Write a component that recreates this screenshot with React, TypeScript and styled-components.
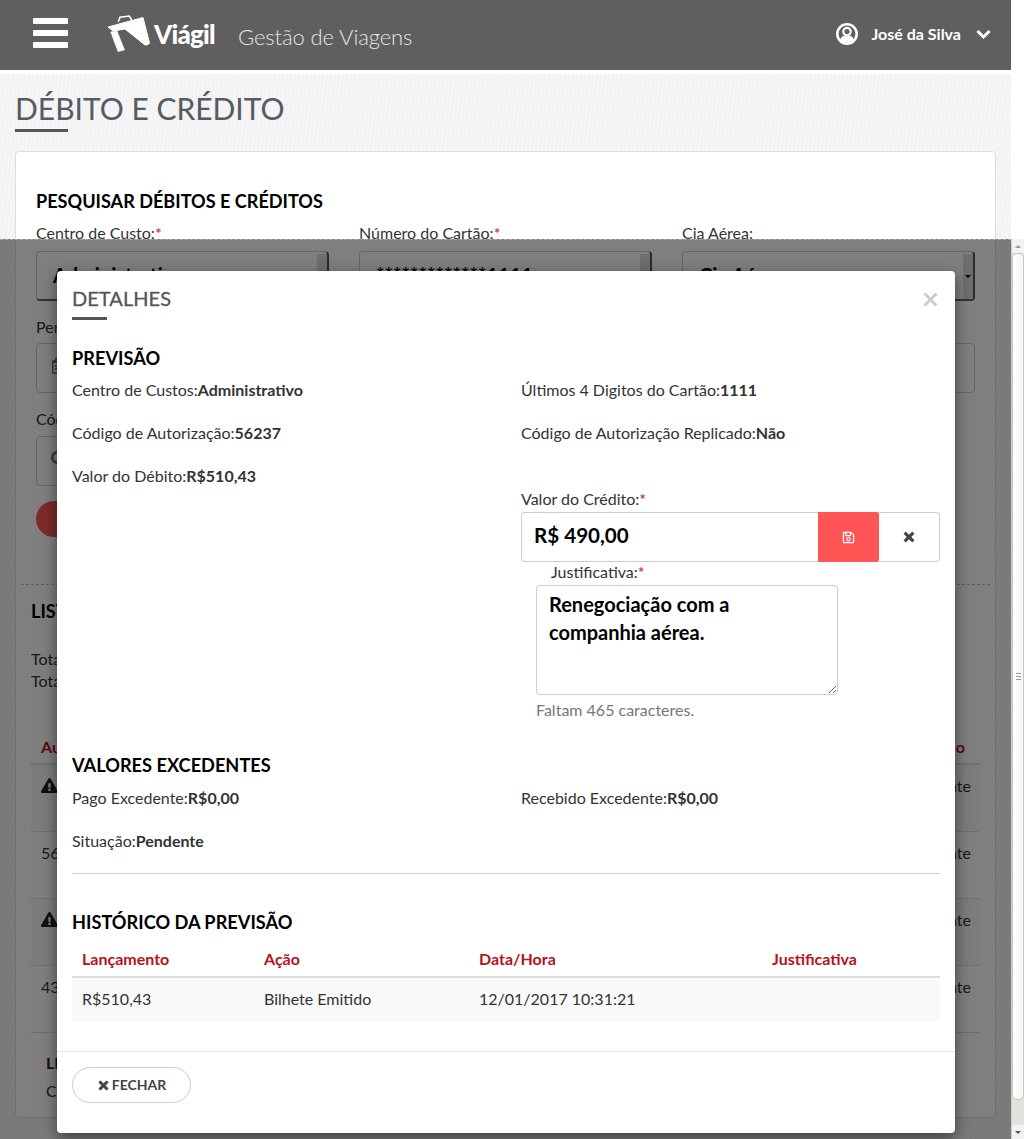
import React from "react";
import styled, { createGlobalStyle } from "styled-components";
import { FaChevronDown, FaExclamationTriangle, FaRegCalendarAlt, FaRegSave, FaSearch, FaTimes } from "react-icons/fa";

const Global = createGlobalStyle`
  html, body { margin: 0; padding: 0; background: #fff; }
  * { box-sizing: border-box; }
  body { font-family: Lato, "Liberation Sans", sans-serif; font-size: 16px; line-height: 20px; color: #333; }
`;

const Page = styled.div`
  position: relative;
  width: 1024px;
  height: 1139px;
  overflow: hidden;
  background: #fff;
`;
const Main = styled.div`
  width: 1011px;
  height: 1139px;
  display: flex;
  flex-direction: column;
`;
const Header = styled.header`
  height: 70px;
  flex: none;
  display: flex;
  align-items: center;
  padding: 0 20px 0 33px;
  color: #fff;
  background: repeating-conic-gradient(#636363 0 25%, #5b5b5b 0 50%) 0 0 / 2px 2px;
`;
const Burger = styled.div`
  width: 35px;
  height: 30px;
  margin-top: -4px;
  display: flex;
  flex-direction: column;
  justify-content: space-between;
  span { display: block; height: 6px; background: #fff; border-radius: 1px; }
`;
const Logo = styled.svg`
  width: 44px;
  height: 38px;
  margin: -4px 0 0 39px;
  flex: none;
`;
const Brand = styled.span`
  font-weight: 900;
  font-size: 26px;
  letter-spacing: -0.8px;
  margin: -2px 0 0 3px;
  width: 84px;
`;
const Tagline = styled.span`
  font-weight: 300;
  font-size: 22px;
  letter-spacing: -0.1px;
  margin-top: 3px;
  color: #e4e4e4;
`;
const User = styled.div`
  margin-left: auto;
  display: flex;
  align-items: center;
  font-weight: 700;
  font-size: 16px;
  margin-top: -2px;
  svg { stroke: currentColor; }
`;
const UserName = styled.span`
  margin: 0 15px 0 13px;
`;
const UserIcon = styled.svg`
  width: 22px;
  height: 22px;
  flex: none;
  stroke: none;
`;
const Chevron = styled(FaChevronDown)`
  stroke-width: 30px;
`;
const Content = styled.main`
  flex: 1;
  margin-top: 4px;
  padding: 0 15px;
  background: repeating-linear-gradient(97deg, #f2f2f2 0 2px, #f6f6f6 2px 4px);
`;
const PageTitle = styled.h1`
  margin: 0;
  padding: 14px 0 0;
  height: 77px;
  font-weight: 400;
  font-size: 30px;
  line-height: 40px;
  color: #555a63;
  &::after {
    content: "";
    display: block;
    width: 53px;
    height: 3px;
    margin-top: 1px;
    background: #555;
  }
`;
const Card = styled.section`
  height: 967px;
  padding: 0 20px;
  background: #fff;
  border: 1px solid #ddd;
  border-radius: 4px;
`;
const SectionTitle = styled.h2`
  margin: 0;
  font-size: 18.2px;
  line-height: 22px;
  font-weight: 700;
  color: #000;
`;
const CardTitle = styled(SectionTitle)`
  padding-top: 38px;
  margin-bottom: 11px;
  font-size: 18.1px;
`;
const FormGrid = styled.div`
  display: grid;
  grid-template-columns: repeat(3, 293px);
  column-gap: 30px;
`;
const Label = styled.label`
  display: block;
  color: #333;
  i { color: #b5121b; font-style: normal; }
`;
const Select = styled.div`
  position: relative;
  height: 50px;
  margin-top: 8px;
  padding: 9px 16px;
  font-size: 20px;
  line-height: 28px;
  font-weight: 700;
  color: #000;
  border: 1px solid #ccc;
  border-right: 2px solid #555;
  border-bottom: 2px solid #666;
  border-radius: 4px;
  &::before {
    content: "";
    position: absolute;
    top: 2px;
    right: 0;
    bottom: 0;
    width: 10px;
    background: #ddd;
  }
  &::after {
    content: "";
    position: absolute;
    top: 23px;
    right: 2px;
    border-left: 3px solid transparent;
    border-right: 3px solid transparent;
    border-top: 3px solid #000;
  }
`;
const WideField = styled.div<{ $top: number }>`
  height: 50px;
  margin-top: ${(p) => p.$top}px;
  padding: 14px;
  border: 1px solid #ccc;
  border-radius: 4px;
  color: #777;
  font-size: 16px;
`;
const CodeField = styled(WideField)`
  width: 293px;
`;
const Block = styled.div<{ $top: number }>`
  margin-top: ${(p) => p.$top}px;
`;
const SearchButton = styled.div`
  width: 130px;
  height: 36px;
  margin-top: 15px;
  background: #ff5555;
  border-radius: 18px;
`;
const ListArea = styled.div`
  margin: 47px -15px 0;
  padding: 15px 10px 0;
  border-top: 1px dashed #bbb;
`;
const TotalLine = styled.p`
  margin: 0;
  line-height: 22px;
`;
const ListTable = styled.div`
  margin-top: 37px;
`;
const ListHead = styled.div`
  height: 36px;
  display: grid;
  grid-template-columns: 863px 1fr;
  padding: 0 10px;
  color: #b5121b;
  font-weight: 700;
  line-height: 36px;
  border-bottom: 2px solid #ddd;
`;
const ListRow = styled.div<{ $odd?: boolean }>`
  height: 67px;
  display: grid;
  grid-template-columns: 863px 1fr;
  padding: 11px 10px 0;
  background: ${(p) => (p.$odd ? "#f9f9f9" : "#fff")};
  border-bottom: 1px solid #ddd;
  svg { color: #222; font-size: 17px; display: block; margin-top: 1px; }
`;
const Legend = styled.div`
  padding: 20px 15px 0;
  strong { display: block; color: #222; margin-bottom: 8px; }
`;

const Overlay = styled.div`
  position: absolute;
  top: 239px;
  left: 0;
  width: 1011px;
  bottom: 0;
  background: rgba(0, 0, 0, 0.5);
  border-top: 1px dashed #aaa;
`;
const Modal = styled.div`
  position: absolute;
  top: 31px;
  left: 57px;
  width: 898px;
  height: 862px;
  background: #fff;
  border-radius: 4px;
  box-shadow: 0 5px 15px rgba(0, 0, 0, 0.5);
`;
const ModalHeader = styled.div`
  display: flex;
  justify-content: space-between;
  padding: 15px 17px 0 15px;
`;
const ModalTitle = styled.h3`
  margin: 0;
  font-size: 20px;
  line-height: 24px;
  font-weight: 400;
  color: #555;
  -webkit-text-stroke: 0.3px #555;
  letter-spacing: 0.05px;
  &::after {
    content: "";
    display: block;
    width: 35px;
    height: 3px;
    margin-top: 7px;
    background: #555;
  }
`;
const CloseIcon = styled.svg`
  width: 15px;
  height: 15px;
  margin-top: 6px;
`;
const ModalBody = styled.div`
  padding: 0 15px;
`;
const ModalSection = styled(SectionTitle)<{ $top: number }>`
  margin-top: ${(p) => p.$top}px;
`;
const TwoCols = styled.div<{ $top: number }>`
  margin-top: ${(p) => p.$top}px;
  display: grid;
  grid-template-columns: 449px 419px;
`;
const Info = styled.div`
  height: 20px;
  margin-bottom: 23px;
  color: #333;
  b { font-weight: 700; }
`;
const CreditBlock = styled.div`
  padding-top: 23px;
`;
const CreditGroup = styled.div`
  display: flex;
  height: 50px;
  margin-top: 3px;
`;
const CreditInput = styled.input`
  flex: 1;
  min-width: 0;
  height: 50px;
  padding: 0 12px 4px;
  font: 700 20.6px Lato, sans-serif;
  color: #000;
  border: 1px solid #ccc;
  border-right: 0;
  border-radius: 4px 0 0 4px;
  outline: 0;
`;
const SaveButton = styled.div`
  width: 61px;
  display: flex;
  align-items: center;
  justify-content: center;
  background: #ff5555;
  color: #fff;
  font-size: 13px;
  border-radius: 0 2px 2px 0;
`;
const CancelButton = styled.div`
  width: 61px;
  display: flex;
  align-items: center;
  justify-content: center;
  color: #444;
  font-size: 14px;
  border: 1px solid #ccc;
  border-left: 0;
  border-radius: 0 4px 4px 0;
  svg { stroke: currentColor; stroke-width: 30px; }
`;
const JustifyBlock = styled.div`
  margin-left: 15px;
`;
const JustifyLabel = styled(Label)`
  padding-left: 15px;
`;
const JustifyArea = styled.textarea`
  display: block;
  width: 302px;
  height: 110px;
  margin-top: 3px;
  padding: 4px 12px;
  font: 700 20px/28px Lato, sans-serif;
  color: #000;
  border: 1px solid #ccc;
  border-radius: 4px;
  outline: 0;
`;
const Remaining = styled.div`
  margin-top: 5px;
  color: #777;
`;
const Divider = styled.hr`
  margin: -1px 0 0;
  border: 0;
  border-top: 1px solid #ccc;
`;
const HistoryTable = styled.table`
  width: 868px;
  margin-top: 5px;
  border-collapse: collapse;
  table-layout: fixed;
  th {
    height: 39px;
    padding: 4px 10px 0;
    text-align: left;
    color: #b5121b;
    font-weight: 700;
    border-bottom: 2px solid #ddd;
    vertical-align: middle;
  }
  td {
    height: 44px;
    padding: 0 10px 2px;
    background: #f9f9f9;
  }
`;
const ModalFooter = styled.div`
  margin-top: 30px;
  padding: 15px;
  border-top: 1px solid #e5e5e5;
`;
const CloseButton = styled.div`
  width: 119px;
  height: 36px;
  display: flex;
  align-items: center;
  justify-content: center;
  gap: 2px;
  font-size: 14px;
  font-weight: 700;
  color: #444;
  border: 1px solid #ccc;
  border-radius: 18px;
  svg { font-size: 13px; stroke: currentColor; stroke-width: 30px; }
`;

const Scrollbar = styled.div`
  position: absolute;
  top: 239px;
  right: 0;
  bottom: 0;
  width: 13px;
  display: flex;
  flex-direction: column;
  background: #e4e2df;
  border-left: 1px solid #cfcdca;
`;
const ScrollArrow = styled.div<{ $down?: boolean }>`
  height: 14px;
  flex: none;
  background: #f3f2f0;
  display: flex;
  align-items: center;
  justify-content: center;
  &::after {
    content: "";
    border-left: 3px solid transparent;
    border-right: 3px solid transparent;
    ${(p) => (p.$down ? "border-top: 3px solid #555;" : "border-bottom: 3px solid #999;")}
  }
`;
const ScrollThumb = styled.div`
  height: 847px;
  flex: none;
  display: flex;
  align-items: center;
  justify-content: center;
  background: linear-gradient(90deg, #fff, #f6f5f3);
  border: 1px solid #c8c6c3;
  border-radius: 5px;
  span { display: block; width: 5px; height: 8px; background: repeating-linear-gradient(#999 0 1px, transparent 1px 3px); }
`;
const ScrollTrack = styled.div`
  flex: 1;
`;

const Logotype = () => (
  <Logo viewBox="0 0 44 38" aria-hidden="true">
    <path d="M1 13 L36 3.5 L42.5 29 Q42 31 38 31 L18 15 L6 17 Z" fill="#fff" stroke="#fff" strokeWidth="1" strokeLinejoin="round" />
    <path d="M3.7 18 L11 37.5 L17.5 36 L10 17 Z" fill="#fff" stroke="#fff" strokeWidth="0.6" strokeLinejoin="round" />
    <path d="M11.3 7.7 L13 3.3 L22.3 2 L24.7 6" fill="none" stroke="#fff" strokeWidth="1.6" />
  </Logo>
);

const AccountIcon = () => (
  <UserIcon viewBox="0 0 22 22" aria-hidden="true">
    <circle cx="11" cy="11" r="9.7" fill="none" stroke="#fff" strokeWidth="2.6" />
    <circle cx="11" cy="8.6" r="3.7" fill="none" stroke="#fff" strokeWidth="2.2" />
    <path d="M4.6 17 Q5.5 13.4 8 13.2 Q11 14.6 14 13.2 Q16.5 13.4 17.4 17 Q11 21.6 4.6 17 Z" fill="#fff" />
  </UserIcon>
);

export default function App() {
  return (
    <Page>
      <Global />
      <Main>
        <Header>
          <Burger><span /><span /><span /></Burger>
          <Logotype />
          <Brand>Viágil</Brand>
          <Tagline>Gestão de Viagens</Tagline>
          <User>
            <AccountIcon />
            <UserName>José da Silva</UserName>
            <Chevron size={15} />
          </User>
        </Header>
        <Content>
          <PageTitle>DÉBITO E CRÉDITO</PageTitle>
          <Card>
            <CardTitle>PESQUISAR DÉBITOS E CRÉDITOS</CardTitle>
            <FormGrid>
              <div><Label>Centro de Custo:<i>*</i></Label><Select>Administrativo</Select></div>
              <div><Label>Número do Cartão:<i>*</i></Label><Select>*************1111</Select></div>
              <div><Label>Cia Aérea:</Label><Select>Cia Aérea</Select></div>
            </FormGrid>
            <Block $top={16}><Label>Período:</Label></Block>
            <WideField $top={6}><FaRegCalendarAlt /></WideField>
            <Block $top={16}><Label>Código:</Label></Block>
            <CodeField $top={7}><FaSearch /></CodeField>
            <SearchButton />
            <ListArea>
              <SectionTitle>LISTA DE DÉBITOS E CRÉDITOS</SectionTitle>
              <Block $top={26}>
                <TotalLine>Total de Débitos: R$ 0,00</TotalLine>
                <TotalLine>Total de Créditos: R$ 0,00</TotalLine>
              </Block>
              <ListTable>
                <ListHead><span>Autorização</span><span>Situação</span></ListHead>
                <ListRow $odd><span><FaExclamationTriangle /></span><span>Pendente</span></ListRow>
                <ListRow><span>56237</span><span>Pendente</span></ListRow>
                <ListRow $odd><span><FaExclamationTriangle /></span><span>Pendente</span></ListRow>
                <ListRow><span>43122</span><span>Pendente</span></ListRow>
              </ListTable>
              <Legend>
                <strong>LEGENDA</strong>
                <span>Crédito</span>
              </Legend>
            </ListArea>
          </Card>
        </Content>
      </Main>
      <Overlay>
        <Modal>
          <ModalHeader>
            <ModalTitle>DETALHES</ModalTitle>
            <CloseIcon viewBox="0 0 15 15" aria-label="Fechar">
              <path d="M1.5 1.5 L13.5 13.5 M13.5 1.5 L1.5 13.5" stroke="#ccc" strokeWidth="3" fill="none" />
            </CloseIcon>
          </ModalHeader>
          <ModalBody>
            <ModalSection $top={27}>PREVISÃO</ModalSection>
            <TwoCols $top={11}>
              <div>
                <Info>Centro de Custos:<b>Administrativo</b></Info>
                <Info>Código de Autorização:<b>56237</b></Info>
                <Info>Valor do Débito:<b>R$510,43</b></Info>
              </div>
              <div>
                <Info>Últimos 4 Digitos do Cartão:<b>1111</b></Info>
                <Info>Código de Autorização Replicado:<b>Não</b></Info>
                <CreditBlock>
                  <Label>Valor do Crédito:<i>*</i></Label>
                  <CreditGroup>
                    <CreditInput readOnly value="R$ 490,00" />
                    <SaveButton><FaRegSave /></SaveButton>
                    <CancelButton><FaTimes /></CancelButton>
                  </CreditGroup>
                </CreditBlock>
                <JustifyBlock>
                  <JustifyLabel>Justificativa:<i>*</i></JustifyLabel>
                  <JustifyArea readOnly value="Renegociação com a companhia aérea." />
                  <Remaining>Faltam 465 caracteres.</Remaining>
                </JustifyBlock>
              </div>
            </TwoCols>
            <ModalSection $top={34}>VALORES EXCEDENTES</ModalSection>
            <TwoCols $top={12}>
              <div>
                <Info>Pago Excedente:<b>R$0,00</b></Info>
                <Info>Situação:<b>Pendente</b></Info>
              </div>
              <div>
                <Info>Recebido Excedente:<b>R$0,00</b></Info>
              </div>
            </TwoCols>
            <Divider />
            <ModalSection $top={37}>HISTÓRICO DA PREVISÃO</ModalSection>
            <HistoryTable>
              <colgroup>
                <col width="182" /><col width="215" /><col width="293" /><col width="178" />
              </colgroup>
              <thead>
                <tr><th>Lançamento</th><th>Ação</th><th>Data/Hora</th><th>Justificativa</th></tr>
              </thead>
              <tbody>
                <tr><td>R$510,43</td><td>Bilhete Emitido</td><td>12/01/2017 10:31:21</td><td /></tr>
              </tbody>
            </HistoryTable>
          </ModalBody>
          <ModalFooter>
            <CloseButton><FaTimes />FECHAR</CloseButton>
          </ModalFooter>
        </Modal>
      </Overlay>
      <Scrollbar>
        <ScrollArrow />
        <ScrollThumb><span /></ScrollThumb>
        <ScrollTrack />
        <ScrollArrow $down />
      </Scrollbar>
    </Page>
  );
}
